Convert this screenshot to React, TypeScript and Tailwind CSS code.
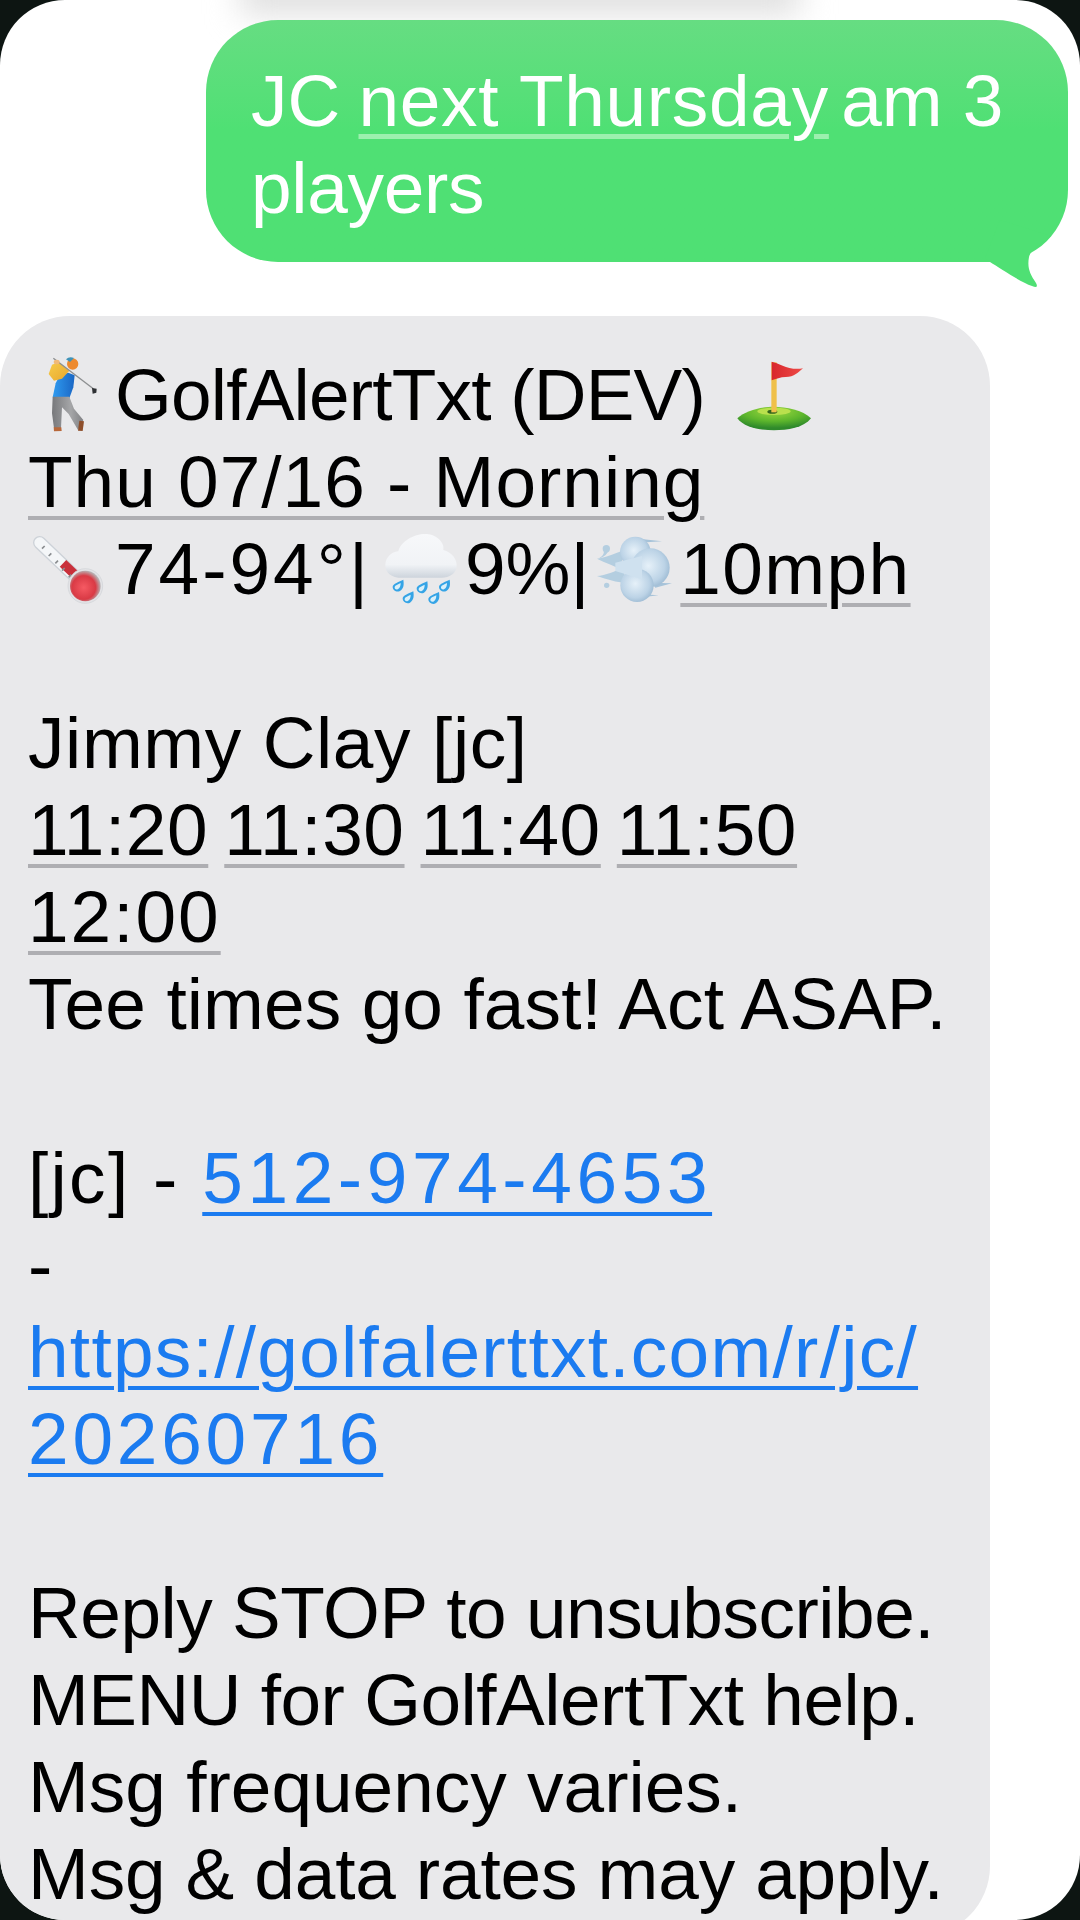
import type { ReactNode } from "react";

const Golfer = () => (
  <svg viewBox="0 0 210 270" className="w-[70px] h-[90px] shrink-0 ml-[12px] mr-[5px]">
    <defs>
      <linearGradient id="gShirt" x1="0" y1="0" x2="1" y2="0"><stop offset="0" stopColor="#2f9bf0" /><stop offset="1" stopColor="#1a66c4" /></linearGradient>
      <linearGradient id="gPants" x1="0" y1="0" x2="1" y2="0"><stop offset="0" stopColor="#77787b" /><stop offset="0.6" stopColor="#a5a6a8" /><stop offset="1" stopColor="#808184" /></linearGradient>
      <linearGradient id="gArm" x1="0" y1="0" x2="1" y2="1"><stop offset="0" stopColor="#f6cc4a" /><stop offset="1" stopColor="#e9a72e" /></linearGradient>
    </defs>
    <path d="M60 75 L85 68 L104 76 L100 112 L88 145 L38 142 L47 100Z" fill="url(#gShirt)" />
    <path d="M38 140 L88 140 L102 176 L130 210 L114 240 L86 192 L66 172 L63 235 L42 235 L36 190Z" fill="url(#gPants)" />
    <path d="M41 232 L64 232 L65 243 L42 244Z" fill="#b8683a" />
    <path d="M118 212 L132 214 L128 243 L114 242Z" fill="#8e4f2b" />
    <path d="M36 44 L56 36 L88 62 L66 86 L42 92 L26 72Z" fill="url(#gArm)" />
    <path d="M40 25 L160 116" stroke="#8d8f91" strokeWidth="4" fill="none" />
    <path d="M156 114 L170 116 L169 128 L158 131Z" fill="#2e3033" />
    <circle cx="98" cy="42" r="17" fill="#ed8a2f" />
    <path d="M78 28 Q88 18 102 24 L90 36Z" fill="#3f93b8" />
    <ellipse cx="50" cy="36" rx="9" ry="7" fill="#f0b977" />
  </svg>
);

const Flag = () => (
  <svg viewBox="0 0 270 240" className="w-[90px] h-[80px] shrink-0">
    <defs>
      <radialGradient id="gGreen" cx="0.5" cy="0.2" r="0.7"><stop offset="0" stopColor="#9dd93f" /><stop offset="0.6" stopColor="#5cb52c" /><stop offset="1" stopColor="#2f8a2b" /></radialGradient>
      <linearGradient id="gFlag" x1="0" y1="0" x2="1" y2="0"><stop offset="0" stopColor="#d8262c" /><stop offset="1" stopColor="#ee4b47" /></linearGradient>
    </defs>
    <path d="M25 190 C50 165 100 155 135 155 C170 155 222 165 246 190 C225 218 175 226 135 226 C95 226 45 218 25 190Z" fill="url(#gGreen)" />
    <ellipse cx="135" cy="169" rx="50" ry="11" fill="#b9e04d" />
    <ellipse cx="130" cy="170" rx="15" ry="6" fill="#33641c" />
    <rect x="127" y="22" width="16" height="150" fill="#efc04a" />
    <path d="M128 20 C150 24 180 48 222 40 C208 52 196 66 170 66 C155 66 140 72 128 76Z" fill="url(#gFlag)" />
  </svg>
);

const Thermo = () => (
  <svg viewBox="0 0 255 255" className="w-[85px] h-[85px] shrink-0 mr-[2px]">
    <defs>
      <radialGradient id="gBulb" cx="0.45" cy="0.55" r="0.55"><stop offset="0" stopColor="#f65a63" /><stop offset="0.7" stopColor="#d93a45" /><stop offset="1" stopColor="#b8b0b2" /></radialGradient>
    </defs>
    <path d="M35 50 L140 150" stroke="#cdd2d8" strokeWidth="40" strokeLinecap="round" />
    <path d="M35 50 L140 150" stroke="#f4f6f8" strokeWidth="32" strokeLinecap="round" />
    <path d="M105 112 L150 155" stroke="#c9303b" strokeWidth="28" />
    <path d="M42 68 L50 60 M62 90 L70 82 M82 112 L90 104 M102 134 L110 126 M122 154 L130 146" stroke="#8a8d90" strokeWidth="5" />
    <circle cx="172" cy="180" r="52" fill="#e3e3e6" stroke="#cfd2d6" strokeWidth="2" />
    <circle cx="172" cy="180" r="46" fill="url(#gBulb)" />
  </svg>
);

const Drop = ({ x, y }: { x: number; y: number }) => (
  <g transform={`translate(${x} ${y})`}>
    <path d="M22 -26 C24 -12 24 0 12 8 C2 13 -10 6 -10 -5 C-10 -14 10 -20 22 -26Z" fill="#35a4e6" />
    <path d="M14 -16 C14 -8 12 0 5 3 C0 5 -5 1 -4 -4 C-3 -9 6 -12 14 -16Z" fill="#d9f0fa" />
  </g>
);
const Rain = () => (
  <svg viewBox="0 0 255 255" className="w-[85px] h-[85px] shrink-0">
    <defs>
      <linearGradient id="gCloud" x1="0" y1="0" x2="0" y2="1"><stop offset="0" stopColor="#f7f8fa" /><stop offset="0.7" stopColor="#f1f3f6" /><stop offset="1" stopColor="#cdd4dc" /></linearGradient>
    </defs>
    <path d="M55 155 C25 152 12 130 17 108 C22 88 42 76 55 76 C62 45 105 22 140 24 C170 26 195 50 190 72 C215 78 232 100 230 122 C228 142 208 155 185 155Z" fill="url(#gCloud)" />
    <Drop x={48} y={187} />
    <Drop x={120} y={192} />
    <Drop x={187} y={187} />
    <Drop x={78} y={222} />
    <Drop x={155} y={224} />
  </svg>
);

const Wind = () => (
  <svg viewBox="0 0 255 255" className="w-[85px] h-[85px] shrink-0">
    <defs>
      <radialGradient id="gWind1" cx="0.45" cy="0.45" r="0.6"><stop offset="0" stopColor="#e6f1f9" /><stop offset="0.7" stopColor="#bcd3e6" /><stop offset="1" stopColor="#9bb9d2" /></radialGradient>
    </defs>
    <path d="M15 98 C40 95 60 85 90 75 L90 130 C65 120 40 110 15 98Z M15 150 C40 148 70 135 95 125 L100 170 C75 170 45 160 15 150Z" fill="#b4cee0" />
    <path d="M140 38 L210 46 L140 50Z M150 205 L200 208 L150 214Z M180 170 L240 172 L190 185Z" fill="#a7c3d9" />
    <circle cx="130" cy="78" r="46" fill="url(#gWind1)" />
    <circle cx="175" cy="125" r="58" fill="url(#gWind1)" />
    <circle cx="135" cy="178" r="50" fill="url(#gWind1)" />
    <path d="M70 110 L150 90 L150 160 L70 135Z" fill="#cfe1ef" />
    <circle cx="43" cy="68" r="11" fill="#b4cee0" />
    <path d="M35 72 C38 85 30 92 18 98 C30 96 45 88 50 72Z" fill="#b4cee0" />
    <circle cx="44" cy="178" r="8" fill="#b4cee0" />
  </svg>
);

const Line = ({ children, className = "" }: { children?: ReactNode; className?: string }) => (
  <div className={`h-[87px] leading-[87px] flex items-center whitespace-nowrap ${className}`}>{children}</div>
);
const Dd = ({ children }: { children: ReactNode }) => (
  <span className="underline decoration-[#aeaeb2] decoration-[4px] underline-offset-[9px]">{children}</span>
);
const Lnk = ({ children }: { children: ReactNode }) => (
  <span className="text-[#1b7bf0] underline decoration-[#1b7bf0] decoration-[4px] underline-offset-[9px]">{children}</span>
);

export default function App() {
  return (
    <div className="w-[1080px] h-[1920px] bg-[#0d1512] overflow-hidden font-['Liberation_Sans',sans-serif]">
      <div className="relative w-full h-full bg-white rounded-[65px] overflow-hidden">
        <div className="absolute left-[240px] top-[-26px] w-[560px] h-[40px] bg-[#dedede] blur-[16px]" />
        <div className="relative pt-[20px] flex justify-end pr-[12px]">
          <div className="relative w-[862px] h-[242px] rounded-[72px] bg-gradient-to-b from-[#66dd82] to-[#4fe074] from-0% to-[45%] pl-[45px] pt-[37px] text-white text-[73px] leading-[87px]">
            <div className="whitespace-nowrap">JC <span className="ml-[-2px] tracking-[0.7px] underline decoration-[#9cf0ae] decoration-[5px] underline-offset-[8px]">next Thursday</span><span className="ml-[-8px]"> am 3</span></div>
            <div className="tracking-[-0.3px]">players</div>
            <svg viewBox="960 200 100 100" className="absolute left-[754px] top-[180px] w-[100px] h-[100px]">
              <path d="M985 258 L990 262 C1000 268 1020 282 1032 286 Q1039 289 1036 283 C1030 274 1027 268 1029 257 C1031 248 1042 245 1051 236 L1000 220Z" fill="#4fe074" />
            </svg>
          </div>
        </div>
        <div className="mt-[54px] w-[990px] h-[1620px] rounded-[70px] bg-[#e9e9eb] pl-[28px] pt-[35px] text-black text-[73px]">
          <Line><Golfer /><span className="tracking-[-0.8px]">GolfAlertTxt (DEV)</span><span className="ml-[24px] flex"><Flag /></span></Line>
          <Line className="tracking-[1px]"><Dd>Thu 07/16 - Morning</Dd></Line>
          <Line><Thermo /><span className="tracking-[3px]">74-94°|</span><span className="ml-[9px] flex"><Rain /></span><span>9%|</span><span className="ml-[3px] flex"><Wind /></span><span className="ml-[3px] tracking-[1.4px]"><Dd>10mph</Dd></span></Line>
          <Line />
          <Line className="tracking-[0.6px]">Jimmy Clay [jc]</Line>
          <Line className="tracking-[0.6px]"><span className="flex gap-[16px]"><Dd>11:20</Dd><Dd>11:30</Dd><Dd>11:40</Dd><Dd>11:50</Dd></span></Line>
          <Line className="tracking-[2px]"><Dd>12:00</Dd></Line>
          <Line className="tracking-[0.1px]">Tee times go fast! Act ASAP.</Line>
          <Line />
          <Line><span className="whitespace-pre tracking-[2.3px]">[jc] - </span><span className="tracking-[4.6px]"><Lnk>512-974-4653</Lnk></span></Line>
          <Line>-</Line>
          <Line className="tracking-[1.27px]"><Lnk>https://golfalerttxt.com/r/jc/</Lnk></Line>
          <Line className="tracking-[3.8px]"><Lnk>20260716</Lnk></Line>
          <Line />
          <Line className="tracking-[-0.47px]">Reply STOP to unsubscribe.</Line>
          <Line className="tracking-[-0.5px]">MENU for GolfAlertTxt help.</Line>
          <Line>Msg frequency varies.</Line>
          <Line className="tracking-[-0.15px]">Msg &amp; data rates may apply.</Line>
        </div>
      </div>
    </div>
  );
}
